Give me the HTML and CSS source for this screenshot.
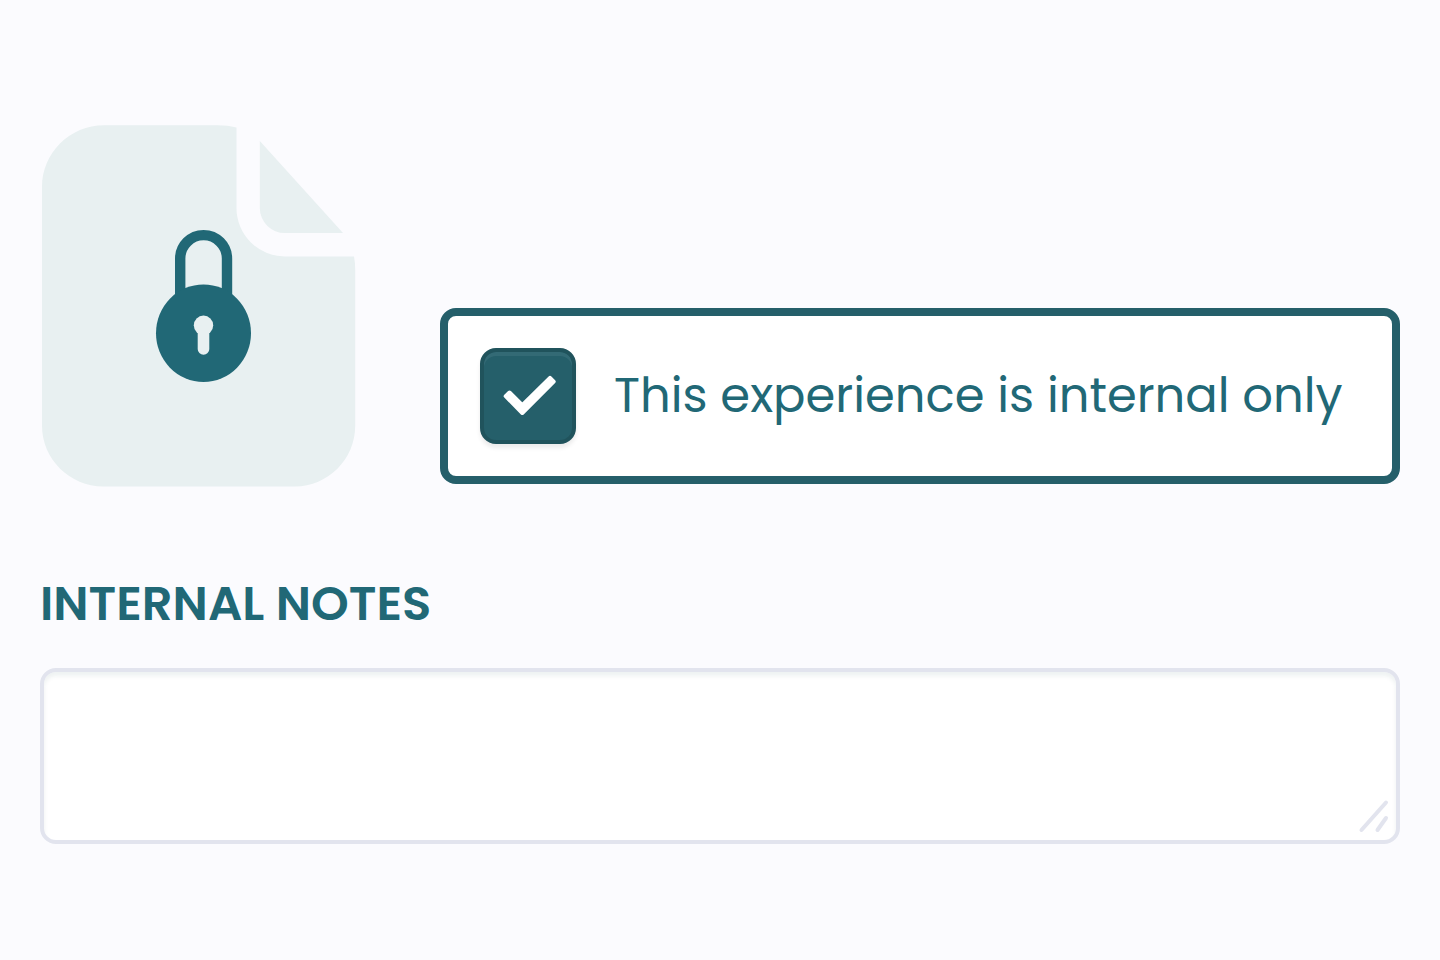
FILE: index.html
```
<!DOCTYPE html>
<html lang="en">
<head>
  <meta charset="utf-8">
  <meta name="viewport" content="width=device-width, initial-scale=1">
  <title>Internal experience</title>
  <link rel="stylesheet" href="styles.css">
</head>
<body>
  <main class="page">
    <section class="visibility">
      <svg class="document-icon" viewBox="40 124 320 364" aria-hidden="true">
        <g class="document-shape">
          <path d="M104 125.300H218Q228 125.300 236.500 127.500V208A48.500 48.500 0 0 0 285 256.500H354Q355.200 262 355.200 270V426C355.200 459 328 486.500 295 486.500H103C70 486.500 42 459 42 426V187C42 153 70 125.300 104 125.300Z"/>
          <path d="M259.800 141V208A25 25 0 0 0 285 233H343Z"/>
        </g>
        <path class="lock-shackle" d="M180.200 300V258.500A23.400 23.400 0 0 1 227 258.500V300"/>
        <ellipse class="lock-body" cx="203.500" cy="333.200" rx="47.500" ry="48.800"/>
        <circle class="document-shape" cx="203.500" cy="325.300" r="9.700"/>
        <rect class="document-shape" x="197.700" y="325" width="11.600" height="29.700" rx="5.800"/>
      </svg>
      <label class="option" for="internal-only">
        <span class="tick">
          <input class="tick-input" type="checkbox" id="internal-only" checked>
          <svg class="tick-mark" viewBox="480 348 96 96" aria-hidden="true">
            <path d="M505.700 396.200L509.500 392.500L522.300 405.200L550 377.800L553.700 381.600L522.300 413Z"/>
          </svg>
        </span>
        <span class="option-text">This experience is internal only</span>
      </label>
    </section>
    <section class="notes">
      <label class="notes-label" for="notes">INTERNAL NOTES</label>
      <div class="notes-field">
        <textarea class="notes-input" id="notes"></textarea>
        <svg class="notes-grip" viewBox="0 0 32 32" aria-hidden="true">
          <path d="M3.500 28L28 0.500M19.500 28L28 16"/>
        </svg>
      </div>
    </section>
  </main>
</body>
</html>
```
FILE: styles.css
```
* {
  box-sizing: border-box;
}

body {
  margin: 0;
  background: #fbfbfe;
  color: #216876;
  font-family: Poppins, Inter, sans-serif;
}

.page {
  display: flex;
  flex-direction: column;
  gap: 80px;
  padding: 124px 40px 40px;
}

.visibility {
  display: grid;
  grid-template-columns: 320px minmax(0, 1fr);
  column-gap: 80px;
  align-items: end;
}

.document-icon {
  display: block;
  width: 100%;
}

.document-shape {
  fill: #e8f0f1;
}

.lock-shackle {
  fill: none;
  stroke: #216876;
  stroke-width: 10.4;
}

.lock-body {
  fill: #216876;
}

.option {
  display: flex;
  align-items: center;
  gap: 38px;
  margin-bottom: 4px;
  padding: 32px;
  border: 8px solid #255f6a;
  border-radius: 16px;
  background: #fff;
  cursor: pointer;
}

.tick {
  position: relative;
  flex: none;
  width: 96px;
  height: 96px;
}

.tick-input {
  display: block;
  appearance: none;
  width: 100%;
  height: 100%;
  margin: 0;
  border: 4px solid #20535c;
  border-radius: 16px;
  background: #fff;
}

.tick-input:checked {
  background: #255f6a;
  box-shadow: inset 0 4px 0 #336a75, 0 4px 4px rgba(0, 0, 0, 0.08);
}

.tick-mark {
  position: absolute;
  inset: 0;
  fill: #fff;
  stroke: #fff;
  stroke-width: 4;
  stroke-linejoin: round;
  pointer-events: none;
}

.option-text {
  font-size: 48px;
  line-height: 72px;
}

.notes {
  display: flex;
  flex-direction: column;
  gap: 28px;
}

.notes-label {
  font-size: 48px;
  font-weight: 600;
  line-height: 72px;
}

.notes-field {
  position: relative;
}

.notes-input {
  display: block;
  width: 100%;
  height: 176px;
  padding: 24px 32px;
  border: 4px solid #e2e4ee;
  border-radius: 16px;
  outline: none;
  background: #fff;
  box-shadow: inset 0 4px 4px rgba(32, 83, 92, 0.08);
  color: inherit;
  font: inherit;
  font-size: 48px;
  resize: none;
}

.notes-grip {
  position: absolute;
  right: 10px;
  bottom: 10px;
  width: 32px;
  height: 32px;
  overflow: visible;
  fill: none;
  stroke: #e2e4ee;
  stroke-width: 4;
  stroke-linecap: round;
  pointer-events: none;
}
```
